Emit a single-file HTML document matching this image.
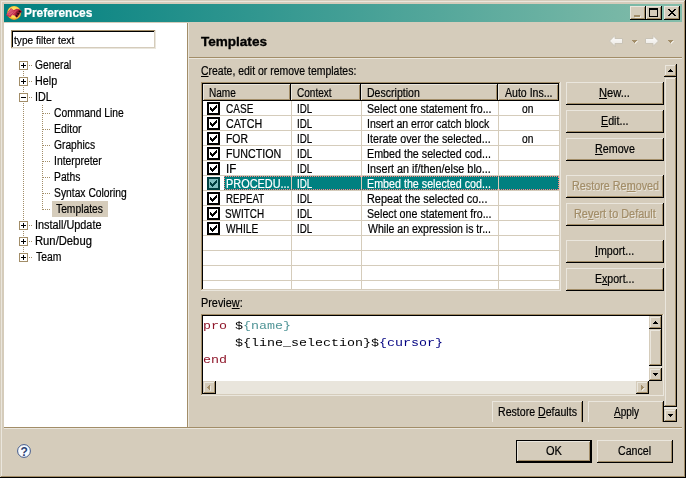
<!DOCTYPE html><html><head><meta charset="utf-8"><title>Preferences</title><style>
html,body{margin:0;padding:0}
body{width:686px;height:478px;overflow:hidden;background:#d5ccbb;position:relative;font-family:"Liberation Sans","DejaVu Sans",sans-serif;font-size:12px;color:#000}
div,span{position:absolute;box-sizing:border-box;white-space:pre}
.t{line-height:14px;height:14px;transform-origin:0 0;-webkit-text-stroke:0.2px currentColor}
.s{font-size:11.5px}
.b{font-weight:bold}
.h{font-weight:bold;font-size:13px;line-height:16px;height:16px;transform-origin:0 0;-webkit-text-stroke:0.35px currentColor}
.raised{background:#d5ccbb;box-shadow:inset -1px -1px 0 #000,inset 1px 1px 0 #eae6dd,inset -2px -2px 0 #a28d68}
.sbtn{background:#d5ccbb;box-shadow:inset -1px -1px 0 #000,inset 1px 1px 0 #d5ccbb,inset -2px -2px 0 #a28d68,inset 2px 2px 0 #eae6dd}
.sunken{background:#fff;box-shadow:inset -1px -1px 0 #eae6dd,inset 1px 1px 0 #a28d68,inset -2px -2px 0 #d5ccbb,inset 2px 2px 0 #000}
.dis{color:#a28d68;text-shadow:1px 1px 0 #eae6dd}
u{text-decoration:underline;text-decoration-thickness:1px;text-underline-offset:1px;text-decoration-skip-ink:none}
.hsep{height:2px;border-top:1px solid #a28d68;border-bottom:1px solid #eae6dd}
.px{background:#000}
.w{color:#fff}
</style></head><body>
<div style="left:0;top:0;width:686px;height:478px;box-shadow:inset -1px -1px 0 #000,inset 1px 1px 0 #d5ccbb,inset -2px -2px 0 #a28d68,inset 2px 2px 0 #eae6dd"></div>
<div style="left:4px;top:4px;width:678px;height:18px;background:linear-gradient(to right,#008080,#84bdaa)"></div>
<svg style="position:absolute;left:4px;top:3px" width="20" height="20" viewBox="4 3 20 20"><defs><radialGradient id="gd" cx="0.5" cy="0.45" r="0.55"><stop offset="0" stop-color="#fff08a"/><stop offset="0.7" stop-color="#ffd84a"/><stop offset="1" stop-color="#d88a1c"/></radialGradient></defs><circle cx="14.1" cy="12.9" r="7" fill="url(#gd)"/><path d="M6 15 L8.5 11.5 L11 8.3 L13.5 10.3 L16.5 8.8 L19.5 9.3 L22 11.5 L20 13.6 L18.2 16 L16.6 17.6 L14.5 15.6 L12.5 15 L10.5 17 L8 16.6 Z" fill="#c22c48"/><path d="M8.5 11.5 L11 8.3 L13.5 10.3 L11.5 13.5 L9 15.5 L6.6 15 Z" fill="#d24c66"/><path d="M7.5 13.5 L12 9.5 M9 15.5 L13.5 11.5 M11 16 L16 10.5" stroke="#e890a0" stroke-width="0.5" fill="none"/><path d="M16.2 12 L18.8 9.8 L22 11.5 L19.8 13.8 L18.2 16 L16.6 17.6 L15 15.8 Z" fill="#8a1a2e"/><path d="M18.4 11 L20 10.4 L20.8 11.6 L19.4 12.6 Z M17 13.4 L18.6 12.8 L19.2 14.2 L17.8 15 Z M15.8 15.4 L17.2 15 L17.6 16.4 L16.6 17.2 Z" fill="#2a0408"/></svg>
<span class="t b w" style="left:24.4px;top:6px;transform:scaleX(0.994);">Preferences</span>
<div class="raised" style="left:630px;top:6px;width:16px;height:14px"><div style="left:5px;top:10px;width:6px;height:2px;background:#eae6dd"></div><div style="left:4px;top:9px;width:6px;height:2px;background:#a28d68"></div></div>
<div class="raised" style="left:646px;top:6px;width:16px;height:14px"><div style="left:3px;top:2px;width:9px;height:9px;border:1px solid #000;border-top-width:2px"></div></div>
<div class="raised" style="left:664px;top:6px;width:16px;height:14px"><svg style="position:absolute;left:4px;top:3px" width="8" height="7" viewBox="0 0 8 7" shape-rendering="crispEdges"><path d="M0 0h2v1h1v1h2v-1h1v-1h2v1h-1v1h-1v1h-1v1h1v1h1v1h1v1h-2v-1h-1v-1h-2v1h-1v1h-2v-1h1v-1h1v-1h1v-1h-1v-1h-1v-1h-1z" fill="#000"/></svg></div>
<div style="left:4px;top:23px;width:183px;height:404px;background:#fff"></div>
<div style="left:187px;top:23px;width:1px;height:404px;background:#a28d68"></div>
<div style="left:188px;top:23px;width:1px;height:404px;background:#eae6dd"></div>
<div class="sunken" style="left:11px;top:30px;width:145px;height:19px"></div>
<span class="t s" style="left:14.4px;top:33px;transform:scaleX(0.881);">type filter text</span>
<div style="left:23px;top:65px;width:1px;height:192px;background:repeating-linear-gradient(to bottom,#a28d68 0 1px,transparent 1px 2px)"></div>
<div style="left:29px;top:65px;width:4px;height:1px;background:repeating-linear-gradient(to right,#a28d68 0 1px,transparent 1px 2px)"></div>
<div style="left:19px;top:61px;width:9px;height:9px;border:1px solid #a28d68;background:#fff"><div class="px" style="left:1px;top:3px;width:5px;height:1px"></div><div class="px" style="left:3px;top:1px;width:1px;height:5px"></div></div>
<span class="t" style="left:35.4px;top:58px;transform:scaleX(0.852);">General</span>
<div style="left:29px;top:81px;width:4px;height:1px;background:repeating-linear-gradient(to right,#a28d68 0 1px,transparent 1px 2px)"></div>
<div style="left:19px;top:77px;width:9px;height:9px;border:1px solid #a28d68;background:#fff"><div class="px" style="left:1px;top:3px;width:5px;height:1px"></div><div class="px" style="left:3px;top:1px;width:1px;height:5px"></div></div>
<span class="t" style="left:35.1px;top:74px;transform:scaleX(0.896);">Help</span>
<div style="left:29px;top:97px;width:4px;height:1px;background:repeating-linear-gradient(to right,#a28d68 0 1px,transparent 1px 2px)"></div>
<div style="left:19px;top:93px;width:9px;height:9px;border:1px solid #a28d68;background:#fff"><div class="px" style="left:1px;top:3px;width:5px;height:1px"></div></div>
<span class="t" style="left:35.1px;top:90px;transform:scaleX(0.900);">IDL</span>
<div style="left:29px;top:225px;width:4px;height:1px;background:repeating-linear-gradient(to right,#a28d68 0 1px,transparent 1px 2px)"></div>
<div style="left:19px;top:221px;width:9px;height:9px;border:1px solid #a28d68;background:#fff"><div class="px" style="left:1px;top:3px;width:5px;height:1px"></div><div class="px" style="left:3px;top:1px;width:1px;height:5px"></div></div>
<span class="t" style="left:35.1px;top:218px;transform:scaleX(0.906);">Install/Update</span>
<div style="left:29px;top:241px;width:4px;height:1px;background:repeating-linear-gradient(to right,#a28d68 0 1px,transparent 1px 2px)"></div>
<div style="left:19px;top:237px;width:9px;height:9px;border:1px solid #a28d68;background:#fff"><div class="px" style="left:1px;top:3px;width:5px;height:1px"></div><div class="px" style="left:3px;top:1px;width:1px;height:5px"></div></div>
<span class="t" style="left:35.1px;top:234px;transform:scaleX(0.937);">Run/Debug</span>
<div style="left:29px;top:257px;width:4px;height:1px;background:repeating-linear-gradient(to right,#a28d68 0 1px,transparent 1px 2px)"></div>
<div style="left:19px;top:253px;width:9px;height:9px;border:1px solid #a28d68;background:#fff"><div class="px" style="left:1px;top:3px;width:5px;height:1px"></div><div class="px" style="left:3px;top:1px;width:1px;height:5px"></div></div>
<span class="t" style="left:36.0px;top:250px;transform:scaleX(0.862);">Team</span>
<div style="left:42px;top:105px;width:1px;height:105px;background:repeating-linear-gradient(to bottom,#a28d68 0 1px,transparent 1px 2px)"></div>
<div style="left:43px;top:113px;width:8px;height:1px;background:repeating-linear-gradient(to right,#a28d68 0 1px,transparent 1px 2px)"></div>
<span class="t" style="left:53.8px;top:106px;transform:scaleX(0.857);">Command Line</span>
<div style="left:43px;top:129px;width:8px;height:1px;background:repeating-linear-gradient(to right,#a28d68 0 1px,transparent 1px 2px)"></div>
<span class="t" style="left:53.7px;top:122px;transform:scaleX(0.880);">Editor</span>
<div style="left:43px;top:145px;width:8px;height:1px;background:repeating-linear-gradient(to right,#a28d68 0 1px,transparent 1px 2px)"></div>
<span class="t" style="left:54.3px;top:138px;transform:scaleX(0.856);">Graphics</span>
<div style="left:43px;top:161px;width:8px;height:1px;background:repeating-linear-gradient(to right,#a28d68 0 1px,transparent 1px 2px)"></div>
<span class="t" style="left:54.4px;top:154px;transform:scaleX(0.863);">Interpreter</span>
<div style="left:43px;top:177px;width:8px;height:1px;background:repeating-linear-gradient(to right,#a28d68 0 1px,transparent 1px 2px)"></div>
<span class="t" style="left:54.0px;top:170px;transform:scaleX(0.860);">Paths</span>
<div style="left:43px;top:193px;width:8px;height:1px;background:repeating-linear-gradient(to right,#a28d68 0 1px,transparent 1px 2px)"></div>
<span class="t" style="left:54.0px;top:186px;transform:scaleX(0.859);">Syntax Coloring</span>
<div style="left:43px;top:209px;width:8px;height:1px;background:repeating-linear-gradient(to right,#a28d68 0 1px,transparent 1px 2px)"></div>
<div style="left:52px;top:201px;width:56px;height:16px;background:#d5ccbb"></div>
<span class="t" style="left:55.5px;top:202px;transform:scaleX(0.858);">Templates</span>
<span class="h" style="left:201.4px;top:34px;transform:scaleX(1.041);">Templates</span>
<div class="hsep" style="left:189px;top:57px;width:493px"></div>
<svg style="position:absolute;left:609px;top:35px" width="14" height="12" viewBox="0 0 14 12"><defs><linearGradient id="ag" x1="0" y1="0" x2="0" y2="1"><stop offset="0" stop-color="#ffffff"/><stop offset="1" stop-color="#e9e6e0"/></linearGradient></defs><path d="M0.5 6 L6 0.5 L6 3.5 L13.5 3.5 L13.5 8.5 L6 8.5 L6 11.5 Z" fill="url(#ag)" stroke="#c9c3b6" stroke-width="1"/></svg>
<svg style="position:absolute;left:645px;top:35px" width="14" height="12" viewBox="0 0 14 12"><path d="M13.5 6 L8 0.5 L8 3.5 L0.5 3.5 L0.5 8.5 L8 8.5 L8 11.5 Z" fill="url(#ag)" stroke="#c9c3b6" stroke-width="1"/></svg>
<div style="left:633px;top:41px;width:5px;height:1px;background:#eae6dd"></div><div style="left:634px;top:42px;width:3px;height:1px;background:#eae6dd"></div><div style="left:635px;top:43px;width:1px;height:1px;background:#eae6dd"></div><div style="left:632px;top:40px;width:5px;height:1px;background:#a28d68"></div><div style="left:633px;top:41px;width:3px;height:1px;background:#a28d68"></div><div style="left:634px;top:42px;width:1px;height:1px;background:#a28d68"></div>
<div style="left:669px;top:41px;width:5px;height:1px;background:#eae6dd"></div><div style="left:670px;top:42px;width:3px;height:1px;background:#eae6dd"></div><div style="left:671px;top:43px;width:1px;height:1px;background:#eae6dd"></div><div style="left:668px;top:40px;width:5px;height:1px;background:#a28d68"></div><div style="left:669px;top:41px;width:3px;height:1px;background:#a28d68"></div><div style="left:670px;top:42px;width:1px;height:1px;background:#a28d68"></div>
<span class="t" style="left:201.4px;top:64px;transform:scaleX(0.872);"><u>C</u>reate, edit or remove templates:</span>
<div class="sunken" style="left:201px;top:82px;width:360px;height:209px"></div>
<div class="raised" style="left:203px;top:84px;width:88px;height:17px"></div>
<span class="t" style="left:208.8px;top:86px;transform:scaleX(0.839);">Name</span>
<div class="raised" style="left:291px;top:84px;width:70px;height:17px"></div>
<span class="t" style="left:297.0px;top:86px;transform:scaleX(0.838);">Context</span>
<div class="raised" style="left:361px;top:84px;width:137px;height:17px"></div>
<span class="t" style="left:367.1px;top:86px;transform:scaleX(0.879);">Description</span>
<div class="raised" style="left:498px;top:84px;width:61px;height:17px"></div>
<span class="t" style="left:504.9px;top:86px;transform:scaleX(0.879);">Auto Ins...</span>
<div style="left:203px;top:115px;width:356px;height:1px;background:#d5ccbb"></div>
<div style="left:203px;top:130px;width:356px;height:1px;background:#d5ccbb"></div>
<div style="left:203px;top:145px;width:356px;height:1px;background:#d5ccbb"></div>
<div style="left:203px;top:160px;width:356px;height:1px;background:#d5ccbb"></div>
<div style="left:203px;top:175px;width:356px;height:1px;background:#d5ccbb"></div>
<div style="left:203px;top:190px;width:356px;height:1px;background:#d5ccbb"></div>
<div style="left:203px;top:205px;width:356px;height:1px;background:#d5ccbb"></div>
<div style="left:203px;top:220px;width:356px;height:1px;background:#d5ccbb"></div>
<div style="left:203px;top:235px;width:356px;height:1px;background:#d5ccbb"></div>
<div style="left:203px;top:250px;width:356px;height:1px;background:#d5ccbb"></div>
<div style="left:203px;top:265px;width:356px;height:1px;background:#d5ccbb"></div>
<div style="left:203px;top:280px;width:356px;height:1px;background:#d5ccbb"></div>
<div style="left:291px;top:101px;width:1px;height:188px;background:#d5ccbb"></div>
<div style="left:361px;top:101px;width:1px;height:188px;background:#d5ccbb"></div>
<div style="left:498px;top:101px;width:1px;height:188px;background:#d5ccbb"></div>
<div style="left:207px;top:102px;width:13px;height:13px;border:2px solid #000;background:#fff"><svg style="position:absolute;left:1px;top:1px" width="7" height="7" viewBox="0 0 7 7" shape-rendering="crispEdges"><path d="M0 2h1v1h1v1h1v-1h1v-1h1v-1h1v-1h1v3h-1v1h-1v1h-1v1h-1v1h-1v-1h-1v-1h-1z" fill="#000"/></svg></div>
<span class="t" style="left:226.0px;top:102px;transform:scaleX(0.836);">CASE</span>
<span class="t" style="left:297.2px;top:102px;transform:scaleX(0.817);">IDL</span>
<span class="t" style="left:366.6px;top:102px;transform:scaleX(0.889);">Select one statement fro...</span>
<span class="t" style="left:522.1px;top:102px;transform:scaleX(0.854);">on</span>
<div style="left:207px;top:117px;width:13px;height:13px;border:2px solid #000;background:#fff"><svg style="position:absolute;left:1px;top:1px" width="7" height="7" viewBox="0 0 7 7" shape-rendering="crispEdges"><path d="M0 2h1v1h1v1h1v-1h1v-1h1v-1h1v-1h1v3h-1v1h-1v1h-1v1h-1v1h-1v-1h-1v-1h-1z" fill="#000"/></svg></div>
<span class="t" style="left:226.0px;top:117px;transform:scaleX(0.893);">CATCH</span>
<span class="t" style="left:297.2px;top:117px;transform:scaleX(0.817);">IDL</span>
<span class="t" style="left:367.3px;top:117px;transform:scaleX(0.881);">Insert an error catch block</span>
<div style="left:207px;top:132px;width:13px;height:13px;border:2px solid #000;background:#fff"><svg style="position:absolute;left:1px;top:1px" width="7" height="7" viewBox="0 0 7 7" shape-rendering="crispEdges"><path d="M0 2h1v1h1v1h1v-1h1v-1h1v-1h1v-1h1v3h-1v1h-1v1h-1v1h-1v1h-1v-1h-1v-1h-1z" fill="#000"/></svg></div>
<span class="t" style="left:226.1px;top:132px;transform:scaleX(0.867);">FOR</span>
<span class="t" style="left:297.2px;top:132px;transform:scaleX(0.817);">IDL</span>
<span class="t" style="left:367.3px;top:132px;transform:scaleX(0.891);">Iterate over the selected...</span>
<span class="t" style="left:522.1px;top:132px;transform:scaleX(0.854);">on</span>
<div style="left:207px;top:147px;width:13px;height:13px;border:2px solid #000;background:#fff"><svg style="position:absolute;left:1px;top:1px" width="7" height="7" viewBox="0 0 7 7" shape-rendering="crispEdges"><path d="M0 2h1v1h1v1h1v-1h1v-1h1v-1h1v-1h1v3h-1v1h-1v1h-1v1h-1v1h-1v-1h-1v-1h-1z" fill="#000"/></svg></div>
<span class="t" style="left:226.1px;top:147px;transform:scaleX(0.890);">FUNCTION</span>
<span class="t" style="left:297.2px;top:147px;transform:scaleX(0.817);">IDL</span>
<span class="t" style="left:367.0px;top:147px;transform:scaleX(0.893);">Embed the selected cod...</span>
<div style="left:207px;top:162px;width:13px;height:13px;border:2px solid #000;background:#fff"><svg style="position:absolute;left:1px;top:1px" width="7" height="7" viewBox="0 0 7 7" shape-rendering="crispEdges"><path d="M0 2h1v1h1v1h1v-1h1v-1h1v-1h1v-1h1v3h-1v1h-1v1h-1v1h-1v1h-1v-1h-1v-1h-1z" fill="#000"/></svg></div>
<span class="t" style="left:226.0px;top:162px;transform:scaleX(0.967);">IF</span>
<span class="t" style="left:297.2px;top:162px;transform:scaleX(0.817);">IDL</span>
<span class="t" style="left:367.3px;top:162px;transform:scaleX(0.901);">Insert an if/then/else blo...</span>
<div style="left:224px;top:176px;width:335px;height:14px;background:#008080"></div>
<div style="left:291px;top:176px;width:1px;height:14px;background:#d5ccbb"></div>
<div style="left:361px;top:176px;width:1px;height:14px;background:#d5ccbb"></div>
<div style="left:498px;top:176px;width:1px;height:14px;background:#d5ccbb"></div>
<div style="left:224px;top:176px;width:335px;height:1px;background:repeating-linear-gradient(to right,#ff8080 0 1px,transparent 1px 2px)"></div>
<div style="left:224px;top:189px;width:335px;height:1px;background:repeating-linear-gradient(to right,transparent 0 1px,#ff8080 1px 2px)"></div>
<div style="left:224px;top:176px;width:1px;height:14px;background:repeating-linear-gradient(to bottom,#ff8080 0 1px,transparent 1px 2px)"></div>
<div style="left:558px;top:176px;width:1px;height:14px;background:repeating-linear-gradient(to bottom,transparent 0 1px,#ff8080 1px 2px)"></div>
<div style="left:207px;top:177px;width:13px;height:13px;border:2px solid #004040;background:#80c0c0"><svg style="position:absolute;left:1px;top:1px" width="7" height="7" viewBox="0 0 7 7" shape-rendering="crispEdges"><path d="M0 2h1v1h1v1h1v-1h1v-1h1v-1h1v-1h1v3h-1v1h-1v1h-1v1h-1v1h-1v-1h-1v-1h-1z" fill="#004040"/></svg></div>
<span class="t w" style="left:225.7px;top:177px;transform:scaleX(0.909);">PROCEDU...</span>
<span class="t w" style="left:297.2px;top:177px;transform:scaleX(0.817);">IDL</span>
<span class="t w" style="left:367.0px;top:177px;transform:scaleX(0.893);">Embed the selected cod...</span>
<div style="left:207px;top:192px;width:13px;height:13px;border:2px solid #000;background:#fff"><svg style="position:absolute;left:1px;top:1px" width="7" height="7" viewBox="0 0 7 7" shape-rendering="crispEdges"><path d="M0 2h1v1h1v1h1v-1h1v-1h1v-1h1v-1h1v3h-1v1h-1v1h-1v1h-1v1h-1v-1h-1v-1h-1z" fill="#000"/></svg></div>
<span class="t" style="left:226.2px;top:192px;transform:scaleX(0.809);">REPEAT</span>
<span class="t" style="left:297.2px;top:192px;transform:scaleX(0.817);">IDL</span>
<span class="t" style="left:367.0px;top:192px;transform:scaleX(0.907);">Repeat the selected co...</span>
<div style="left:207px;top:207px;width:13px;height:13px;border:2px solid #000;background:#fff"><svg style="position:absolute;left:1px;top:1px" width="7" height="7" viewBox="0 0 7 7" shape-rendering="crispEdges"><path d="M0 2h1v1h1v1h1v-1h1v-1h1v-1h1v-1h1v3h-1v1h-1v1h-1v1h-1v1h-1v-1h-1v-1h-1z" fill="#000"/></svg></div>
<span class="t" style="left:225.4px;top:207px;transform:scaleX(0.826);">SWITCH</span>
<span class="t" style="left:297.2px;top:207px;transform:scaleX(0.817);">IDL</span>
<span class="t" style="left:366.6px;top:207px;transform:scaleX(0.889);">Select one statement fro...</span>
<div style="left:207px;top:222px;width:13px;height:13px;border:2px solid #000;background:#fff"><svg style="position:absolute;left:1px;top:1px" width="7" height="7" viewBox="0 0 7 7" shape-rendering="crispEdges"><path d="M0 2h1v1h1v1h1v-1h1v-1h1v-1h1v-1h1v3h-1v1h-1v1h-1v1h-1v1h-1v-1h-1v-1h-1z" fill="#000"/></svg></div>
<span class="t" style="left:226.0px;top:222px;transform:scaleX(0.847);">WHILE</span>
<span class="t" style="left:297.2px;top:222px;transform:scaleX(0.817);">IDL</span>
<span class="t" style="left:367.7px;top:222px;transform:scaleX(0.878);">While an expression is tr...</span>
<div class="raised" style="left:566px;top:82px;width:98px;height:23px"></div>
<span class="t" style="left:598.9px;top:86px;transform:scaleX(0.928);"><u>N</u>ew...</span>
<div class="raised" style="left:566px;top:110px;width:98px;height:23px"></div>
<span class="t" style="left:600.8px;top:114px;transform:scaleX(0.893);"><u>E</u>dit...</span>
<div class="raised" style="left:566px;top:138px;width:98px;height:23px"></div>
<span class="t" style="left:594.9px;top:142px;transform:scaleX(0.893);"><u>R</u>emove</span>
<div class="raised" style="left:566px;top:175px;width:98px;height:23px"></div>
<span class="t dis" style="left:572.3px;top:179px;transform:scaleX(0.900);">Restore Re<u>m</u>oved</span>
<div class="raised" style="left:566px;top:203px;width:98px;height:23px"></div>
<span class="t dis" style="left:574.3px;top:207px;transform:scaleX(0.908);">Re<u>v</u>ert to Default</span>
<div class="raised" style="left:566px;top:240px;width:98px;height:23px"></div>
<span class="t" style="left:595.4px;top:244px;transform:scaleX(0.890);"><u>I</u>mport...</span>
<div class="raised" style="left:566px;top:268px;width:98px;height:23px"></div>
<span class="t" style="left:594.9px;top:272px;transform:scaleX(0.881);">E<u>x</u>port...</span>
<div style="left:664px;top:64px;width:13px;height:358px;background:#e9e5dc"></div>
<div class="sbtn" style="left:664px;top:64px;width:13px;height:13px"></div><div style="left:670px;top:69px;width:1px;height:1px;background:#000"></div><div style="left:669px;top:70px;width:3px;height:1px;background:#000"></div><div style="left:668px;top:71px;width:5px;height:1px;background:#000"></div>
<div class="sbtn" style="left:664px;top:77px;width:13px;height:330px"></div>
<div class="sbtn" style="left:664px;top:409px;width:13px;height:13px"></div><div style="left:668px;top:414px;width:5px;height:1px;background:#000"></div><div style="left:669px;top:415px;width:3px;height:1px;background:#000"></div><div style="left:670px;top:416px;width:1px;height:1px;background:#000"></div>
<span class="t" style="left:201.1px;top:296px;transform:scaleX(0.905);">Previe<u>w</u>:</span>
<div class="sunken" style="left:201px;top:314px;width:463px;height:82px"></div>
<span style="left:203px;top:317px;font-family:'Liberation Mono','DejaVu Sans Mono',monospace;font-size:11.5px;line-height:17px;height:17px;letter-spacing:0;transform-origin:0 0;transform:scaleX(1.1594);color:#000"><b style="color:#8e1428;font-weight:normal">pro</b> $<span style="position:static;color:#4f9496">{name}</span></span>
<span style="left:203px;top:334px;font-family:'Liberation Mono','DejaVu Sans Mono',monospace;font-size:11.5px;line-height:17px;height:17px;letter-spacing:0;transform-origin:0 0;transform:scaleX(1.1594);color:#000">    ${line_selection}$<span style="position:static;color:#000080">{cursor}</span></span>
<span style="left:203px;top:351px;font-family:'Liberation Mono','DejaVu Sans Mono',monospace;font-size:11.5px;line-height:17px;height:17px;letter-spacing:0;transform-origin:0 0;transform:scaleX(1.1594);color:#000"><b style="color:#8e1428;font-weight:normal">end</b></span>
<div style="left:649px;top:316px;width:13px;height:65px;background:#e9e5dc"></div>
<div class="sbtn" style="left:649px;top:316px;width:13px;height:13px"></div><div style="left:655px;top:321px;width:1px;height:1px;background:#000"></div><div style="left:654px;top:322px;width:3px;height:1px;background:#000"></div><div style="left:653px;top:323px;width:5px;height:1px;background:#000"></div>
<div class="sbtn" style="left:649px;top:329px;width:13px;height:37px"></div>
<div class="sbtn" style="left:649px;top:368px;width:13px;height:13px"></div><div style="left:653px;top:373px;width:5px;height:1px;background:#000"></div><div style="left:654px;top:374px;width:3px;height:1px;background:#000"></div><div style="left:655px;top:375px;width:1px;height:1px;background:#000"></div>
<div style="left:203px;top:381px;width:446px;height:13px;background:#e9e5dc"></div>
<div class="sbtn" style="left:203px;top:381px;width:13px;height:13px"></div><div style="left:208px;top:388px;width:1px;height:1px;background:#eae6dd"></div><div style="left:209px;top:387px;width:1px;height:3px;background:#eae6dd"></div><div style="left:210px;top:386px;width:1px;height:5px;background:#eae6dd"></div><div style="left:207px;top:387px;width:1px;height:1px;background:#a28d68"></div><div style="left:208px;top:386px;width:1px;height:3px;background:#a28d68"></div><div style="left:209px;top:385px;width:1px;height:5px;background:#a28d68"></div>
<div class="sbtn" style="left:636px;top:381px;width:13px;height:13px"></div><div style="left:642px;top:386px;width:1px;height:5px;background:#eae6dd"></div><div style="left:643px;top:387px;width:1px;height:3px;background:#eae6dd"></div><div style="left:644px;top:388px;width:1px;height:1px;background:#eae6dd"></div><div style="left:641px;top:385px;width:1px;height:5px;background:#a28d68"></div><div style="left:642px;top:386px;width:1px;height:3px;background:#a28d68"></div><div style="left:643px;top:387px;width:1px;height:1px;background:#a28d68"></div>
<div style="left:649px;top:381px;width:13px;height:13px;background:#d5ccbb"></div>
<div style="left:189px;top:401px;width:475px;height:21px;overflow:hidden"><div class="raised" style="left:303px;top:0;width:91px;height:23px"></div><div class="raised" style="left:399px;top:0;width:76px;height:23px"></div></div>
<span class="t" style="left:498.1px;top:405px;transform:scaleX(0.883);">Restore <u>D</u>efaults</span>
<span class="t" style="left:613.5px;top:405px;transform:scaleX(0.833);"><u>A</u>pply</span>
<div class="hsep" style="left:4px;top:427px;width:678px"></div>
<svg style="position:absolute;left:17px;top:444px" width="14" height="14" viewBox="0 0 14 14"><circle cx="7" cy="7" r="6.4" fill="#f6faff" stroke="#42598a" stroke-width="1"/><text x="7.1" y="12" text-anchor="middle" font-family="Liberation Sans,sans-serif" font-weight="bold" font-size="12" fill="#2b4273">?</text></svg>
<div style="left:516px;top:440px;width:76px;height:23px;background:#000"><div class="raised" style="left:1px;top:1px;width:74px;height:21px"></div></div>
<span class="t" style="left:546.0px;top:444px;transform:scaleX(0.918);">OK</span>
<div class="raised" style="left:597px;top:440px;width:76px;height:23px"></div>
<span class="t" style="left:617.9px;top:444px;transform:scaleX(0.884);">Cancel</span>
</body></html>
